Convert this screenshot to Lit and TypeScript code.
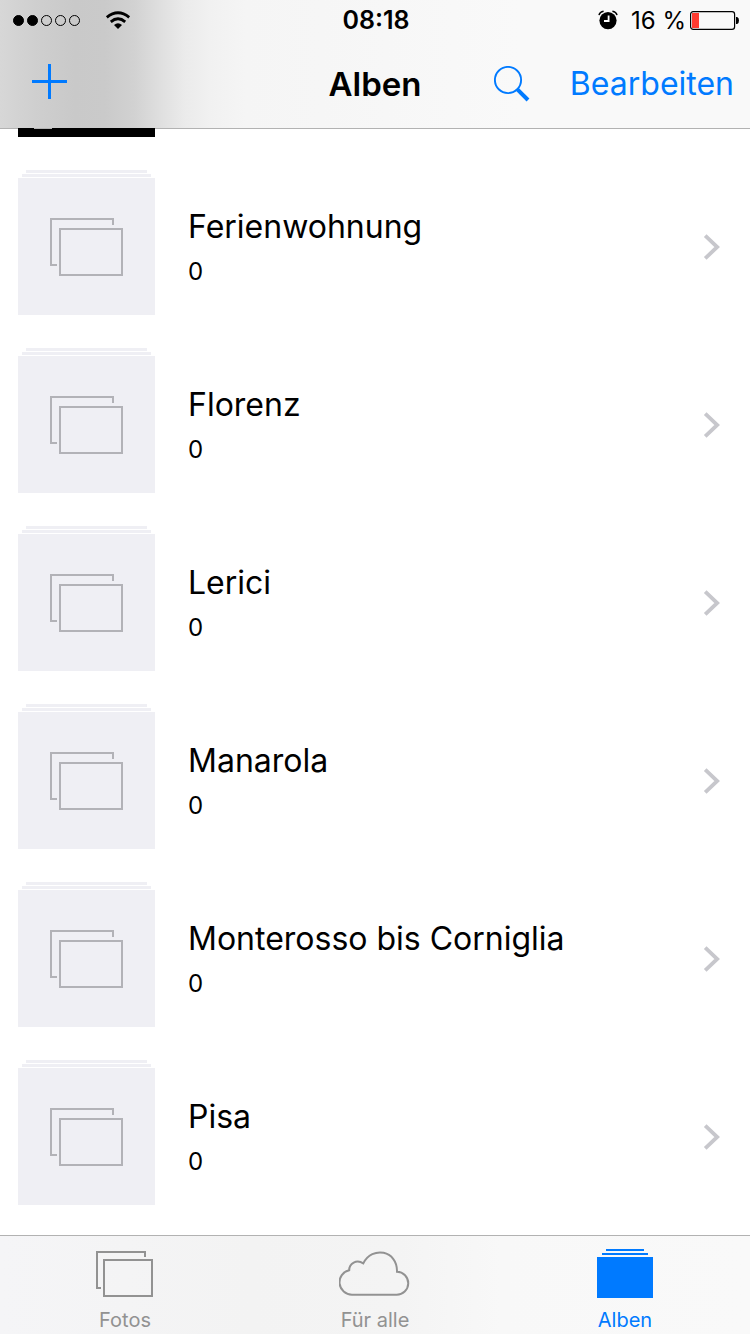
import { LitElement, html, css, svg } from "lit";
import { customElement, property } from "lit/decorators.js";
import { classMap } from "lit/directives/class-map.js";

const photosShape = (w: number, h: number, dx: number, dy: number, tailX: number, tailY: number) => svg`
  <path d="M${dx - tailX} ${h + 1}H1V1H${w + 1}V${tailY}" />
  <rect x=${dx + 1} y=${dy + 1} width=${w} height=${h} />
`;

const iconPlus = html`<svg width="35" height="41" viewBox="0 0 35 41" aria-hidden="true">
  <path d="M16 0h3v16h16v3H19v16h-3V19H0v-3h16z" fill="currentColor" />
</svg>`;

const iconSearch = html`<svg width="36" height="36" viewBox="0 0 36 36" fill="none" stroke="currentColor" aria-hidden="true">
  <circle cx="14" cy="14" r="13.1" stroke-width="1.9" />
  <path d="M23.6 23.6L34 34" stroke-width="4" />
</svg>`;

const iconWifi = html`<svg width="26" height="19" viewBox="0 0 26 19" aria-hidden="true">
  <g fill="none" stroke="#000" stroke-width="2.8">
    <path d="M1.8 6.3Q13 -2.7 24.2 6.3" />
    <path d="M5.8 10.8Q13 4.8 20.2 10.8" />
  </g>
  <path d="M9 14Q13 10.4 17 14L13 18z" />
</svg>`;

const iconAlarm = html`<svg width="20" height="20" viewBox="0 0 20 20" aria-hidden="true">
  <circle cx="10" cy="10.6" r="8.6" />
  <path d="M10.6 5.6v5.4H6" fill="none" stroke="#fff" stroke-width="1.8" />
  <path d="M1 5.2Q1.8 1.8 5.6 1.2M19 5.2Q18.2 1.8 14.4 1.2" fill="none" stroke="#000" stroke-width="1.5" />
</svg>`;

const iconBattery = html`<svg width="49" height="19" viewBox="0 0 49 19" aria-hidden="true">
  <rect x=".6" y=".6" width="44" height="17.8" rx="2.6" fill="none" stroke="#000" stroke-width="1.2" />
  <rect x="2" y="2" width="7" height="15" fill="#ff3b30" />
  <path d="M46 6h1.2q1.8 .8 1.8 3.5t-1.8 3.5H46z" />
</svg>`;

const iconChevron = html`<svg width="17" height="26" viewBox="0 0 17 26" fill="none" stroke="#c7c7cc" stroke-width="3.8" aria-hidden="true">
  <path d="M2.2 1.6L14.2 13L2.2 24.4" />
</svg>`;

const iconAlbumEmpty = html`<svg width="73" height="58" viewBox="0 0 73 58" fill="none" stroke="#b2b2b7" stroke-width="2" aria-hidden="true">
  ${photosShape(62, 46, 9, 10, 2, 7)}
</svg>`;

const iconPhotos = html`<svg width="58" height="50" viewBox="0 0 58 50" fill="none" stroke="currentColor" stroke-width="2" aria-hidden="true">
  <g transform="translate(0 3)">${photosShape(48, 36, 7, 8, 2, 6)}</g>
</svg>`;

const iconCloud = html`<svg width="72" height="50" viewBox="0 0 72 50" fill="none" stroke="currentColor" stroke-width="2" aria-hidden="true">
  <path d="M13 46.7A12.4 12.4 0 0 1 10.2 22.2C10.2 15.5 17.5 11 24.3 15.4C33 -2.2 58.5 2 58 23.7A11.5 11.5 0 0 1 57.5 46.7Z" />
</svg>`;

const iconAlbums = html`<svg width="56" height="50" viewBox="0 0 56 50" fill="currentColor" aria-hidden="true">
  <path d="M9 1h38v2H9zM5 5h46v2H5zM0 9h56v41H0z" />
</svg>`;

@customElement("album-row")
class AlbumRow extends LitElement {
  @property() name = "";
  @property({ type: Number }) count = 0;

  static styles = css`
    :host {
      display: block;
    }
    .row {
      display: flex;
      align-items: center;
      padding: 0 30px 0 18px;
      color: #000;
      text-decoration: none;
    }
    .stack {
      display: flex;
      flex-direction: column;
      align-items: center;
      gap: 1px;
      flex: none;
      width: 137px;
    }
    .sheet {
      height: 3px;
      width: 129px;
      background: #efeff4;
    }
    .back {
      width: 121px;
    }
    .cover {
      display: grid;
      place-items: center;
      width: 137px;
      height: 137px;
      background: #efeff4;
    }
    .text {
      flex: 1;
      min-width: 0;
      padding: 8px 16px 0 33px;
    }
    .name {
      font-size: 32px;
      line-height: 42px;
      white-space: nowrap;
      overflow: hidden;
      text-overflow: ellipsis;
    }
    .count {
      font-size: 24px;
      line-height: 32px;
      padding-top: 8px;
    }
    .chevron {
      display: flex;
      padding-top: 8px;
    }
  `;

  render() {
    return html`<a class="row" href="#">
      <span class="stack">
        <span class="sheet back"></span>
        <span class="sheet"></span>
        <span class="cover">${iconAlbumEmpty}</span>
      </span>
      <div class="text">
        <div class="name">${this.name}</div>
        <div class="count">${this.count}</div>
      </div>
      <span class="chevron">${iconChevron}</span>
    </a>`;
  }
}

@customElement("app-root")
class AppRoot extends LitElement {
  private albums = ["Ferienwohnung", "Florenz", "Lerici", "Manarola", "Monterosso bis Corniglia", "Pisa"];

  private tabs = [
    { label: "Fotos", icon: iconPhotos, active: false },
    { label: "Für alle", icon: iconCloud, active: false },
    { label: "Alben", icon: iconAlbums, active: true },
  ];

  static styles = css`
    :host {
      display: flex;
      flex-direction: column;
      height: 100vh;
      overflow: hidden;
      background: #fff;
      color: #000;
      font-family: Inter, "Liberation Sans", sans-serif;
    }
    svg {
      display: block;
    }
    .top {
      flex: none;
      z-index: 1;
      background: linear-gradient(90deg, #d7d7d7 0, #cfcfcf 35px, #c9c9c9 75px, #cacaca 105px, #d2d2d2 135px, #dfdfdf 160px, #ebebeb 185px, #f1f1f1 210px, #f5f5f5 245px, #f6f6f6 320px, #f9f9f9 520px);
      box-shadow: 0 1px 0 rgba(0, 0, 0, 0.3);
    }
    .status,
    .bar {
      display: grid;
      grid-template-columns: 1fr auto 1fr;
      align-items: center;
    }
    .status {
      height: 40px;
      padding: 0 11px 0 13px;
      font-size: 24px;
    }
    .signal {
      display: flex;
      align-items: center;
      gap: 25px;
    }
    .dots {
      display: flex;
      gap: 3px;
    }
    .dot {
      box-sizing: border-box;
      width: 11px;
      height: 11px;
      border: 1px solid #000;
      border-radius: 50%;
    }
    .full {
      background: #000;
    }
    .time {
      font-size: 25px;
      font-weight: 600;
    }
    .power {
      display: flex;
      align-items: center;
      justify-content: flex-end;
    }
    .percent {
      padding: 0 4px 0 13px;
    }
    .bar {
      height: 88px;
      padding: 0 16px;
    }
    .title {
      margin: 0;
      font-size: 33px;
      font-weight: 600;
      line-height: 40px;
    }
    .actions {
      display: flex;
      align-items: center;
      justify-content: flex-end;
      gap: 40px;
    }
    .action {
      margin: 0;
      padding: 0;
      border: 0;
      background: none;
      color: #007aff;
      font: inherit;
      font-size: 32px;
      line-height: 40px;
      justify-self: start;
    }
    .add {
      padding-left: 16px;
    }
    .list {
      flex: 1;
      min-height: 0;
      overflow: hidden;
    }
    .albums {
      display: grid;
      gap: 33px;
      margin: 0;
      padding: 0;
      list-style: none;
    }
    .previous {
      width: 137px;
      height: 9px;
      margin-left: 18px;
      background: #000;
    }
    .glyph {
      width: 18px;
      height: 1px;
      margin-left: 16px;
      background: #fff;
    }
    .tabs {
      flex: none;
      display: grid;
      grid-template-columns: repeat(3, 1fr);
      border-top: 1px solid #b2b2b2;
      background: linear-gradient(90deg, #f5f5f7 0, #f3f3f3 250px, #f4f4f4 400px, #f8f8f8 500px, #f9f9f9 100%);
    }
    .tab {
      display: flex;
      flex-direction: column;
      align-items: center;
      gap: 9px;
      padding-top: 12px;
      height: 86px;
      color: #929292;
      font-size: 20px;
      line-height: 26px;
      text-decoration: none;
    }
    .active {
      color: #007aff;
    }
  `;

  render() {
    return html`
      <header class="top">
        <div class="status">
          <div class="signal">
            <div class="dots">
              ${[1, 1, 0, 0, 0].map((on) => html`<span class=${classMap({ dot: true, full: !!on })}></span>`)}
            </div>
            ${iconWifi}
          </div>
          <div class="time">08:18</div>
          <div class="power">${iconAlarm}<span class="percent">16 %</span>${iconBattery}</div>
        </div>
        <div class="bar">
          <button class="action add" aria-label="Neues Album">${iconPlus}</button>
          <h1 class="title">Alben</h1>
          <div class="actions">
            <button class="action" aria-label="Suchen">${iconSearch}</button>
            <button class="action">Bearbeiten</button>
          </div>
        </div>
      </header>
      <main class="list">
        <ul class="albums">
          <li class="previous"><div class="glyph"></div></li>
          ${this.albums.map((name) => html`<li><album-row .name=${name}></album-row></li>`)}
        </ul>
      </main>
      <nav class="tabs">
        ${this.tabs.map(
          (t) => html`<a href="#" class=${classMap({ tab: true, active: t.active })}>${t.icon}<span>${t.label}</span></a>`
        )}
      </nav>
    `;
  }
}
